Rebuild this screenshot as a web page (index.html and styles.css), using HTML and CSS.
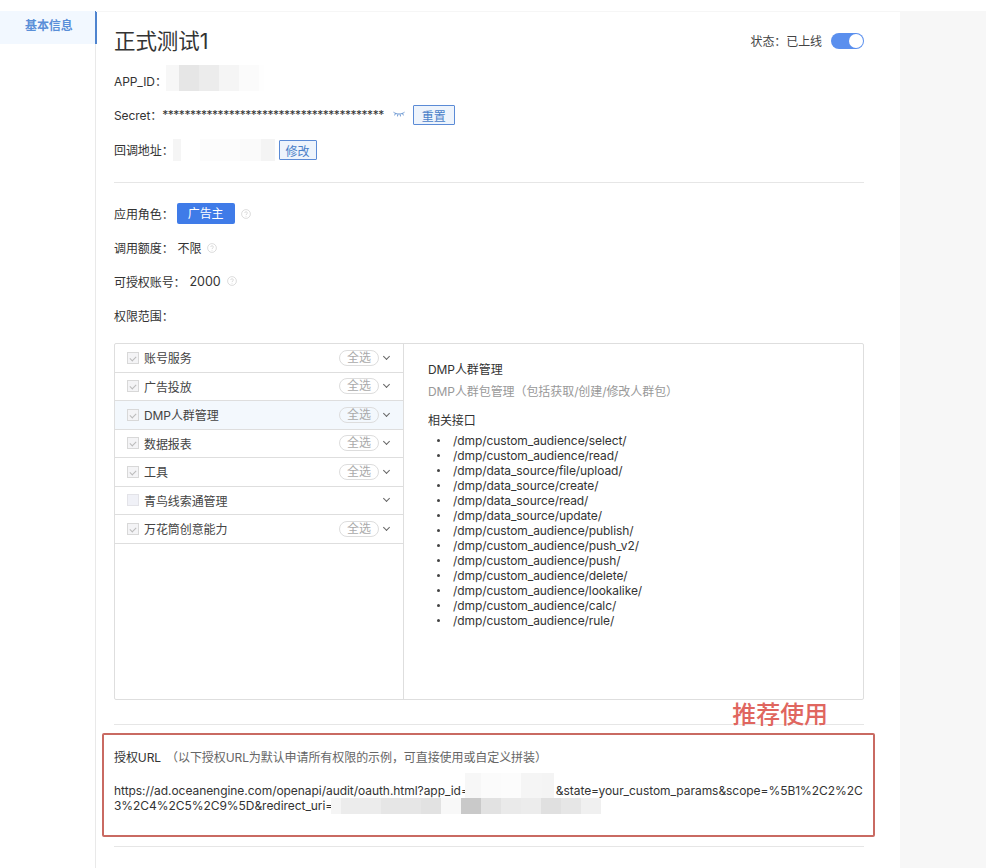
FILE: index.html
```html
<!DOCTYPE html>
<html lang="zh-CN">
<head>
<meta charset="utf-8">
<title>正式测试1</title>
<link rel="stylesheet" href="styles.css">
</head>
<body>
<div class="page">
  <aside class="side">
    <div class="side-item">基本信息</div>
  </aside>
  <main class="main">
    <div class="head">
      <h1 class="title">正式测试1</h1>
      <div class="status">
        <span>状态：已上线</span>
        <span class="toggle"><span class="knob"></span></span>
      </div>
    </div>
    <div class="row"><span>APP_ID：</span><span class="mosaic m-id"></span></div>
    <div class="row"><span>Secret：</span><span class="stars">****************************************</span>
      <svg class="eye" viewBox="0 0 12 7" width="12" height="7"><path d="M.5 1.2c3 2.4 8 2.4 11 0M2.4 2.6 1.6 4.4M4.8 3.4 4.5 5.4M7.2 3.4 7.5 5.4M9.6 2.6 10.4 4.4" fill="none" stroke="#4a80c8" stroke-width=".8"/></svg>
      <button class="btn btn-reset">重置</button>
    </div>
    <div class="row row-cb"><span>回调地址：</span><span class="mosaic m-cb"></span><button class="btn btn-edit">修改</button></div>
    <hr class="line line-a">
    <div class="row row-meta"><span>应用角色：</span><span class="role">广告主</span>
      <svg class="help" viewBox="0 0 10 10" width="10" height="10"><use href="#q"/></svg></div>
    <div class="row row-meta"><span>调用额度：</span><span class="val">不限</span>
      <svg class="help" viewBox="0 0 10 10" width="10" height="10"><use href="#q"/></svg></div>
    <div class="row row-meta"><span>可授权账号：</span><span class="val num">2000</span>
      <svg class="help" viewBox="0 0 10 10" width="10" height="10"><use href="#q"/></svg></div>
    <div class="row row-meta"><span>权限范围：</span></div>

    <section class="scope">
      <ul class="scope-list">
        <li class="scope-item"><span class="check on"></span><span class="name">账号服务</span><span class="pill">全选</span><span class="chev"></span></li>
        <li class="scope-item"><span class="check on"></span><span class="name">广告投放</span><span class="pill">全选</span><span class="chev"></span></li>
        <li class="scope-item active"><span class="check on"></span><span class="name">DMP人群管理</span><span class="pill">全选</span><span class="chev"></span></li>
        <li class="scope-item"><span class="check on"></span><span class="name">数据报表</span><span class="pill">全选</span><span class="chev"></span></li>
        <li class="scope-item"><span class="check on"></span><span class="name">工具</span><span class="pill">全选</span><span class="chev"></span></li>
        <li class="scope-item"><span class="check"></span><span class="name">青鸟线索通管理</span><span class="chev"></span></li>
        <li class="scope-item"><span class="check on"></span><span class="name">万花筒创意能力</span><span class="pill">全选</span><span class="chev"></span></li>
      </ul>
      <div class="detail">
        <div class="d-title">DMP人群管理</div>
        <div class="d-desc">DMP人群包管理（包括获取/创建/修改人群包）</div>
        <div class="d-sub">相关接口</div>
        <ul class="api">
          <li>/dmp/custom_audience/select/</li>
          <li>/dmp/custom_audience/read/</li>
          <li>/dmp/data_source/file/upload/</li>
          <li>/dmp/data_source/create/</li>
          <li>/dmp/data_source/read/</li>
          <li>/dmp/data_source/update/</li>
          <li>/dmp/custom_audience/publish/</li>
          <li>/dmp/custom_audience/push_v2/</li>
          <li>/dmp/custom_audience/push/</li>
          <li>/dmp/custom_audience/delete/</li>
          <li>/dmp/custom_audience/lookalike/</li>
          <li>/dmp/custom_audience/calc/</li>
          <li>/dmp/custom_audience/rule/</li>
        </ul>
      </div>
    </section>

    <hr class="line line-b">
    <section class="auth">
      <div class="auth-box"></div>
      <div class="auth-note">推荐使用</div>
      <div class="auth-title">授权URL<span class="auth-hint">（以下授权URL为默认申请所有权限的示例，可直接使用或自定义拼装）</span></div>
      <p class="auth-url">https://ad.oceanengine.com/openapi/audit/oauth.html?app_id=<span class="mosaic m-app"></span>&amp;state=your_custom_params&amp;scope=%5B1%2C2%2C3%2C4%2C5%2C9%5D&amp;redirect_uri=<span class="mosaic m-uri"></span></p>
    </section>
    <hr class="line line-c">
  </main>
  <div class="rail"></div>
</div>
<svg class="defs" width="0" height="0"><defs><g id="q"><circle cx="5" cy="5" r="4.4" fill="none" stroke="#d4d4d4" stroke-width=".8"/><path d="M3.7 4c0-1.7 2.7-1.7 2.7 0 0 1-1.4 1-1.4 2.1M5 7v.7" fill="none" stroke="#d4d4d4" stroke-width=".8"/></g></defs></svg>
</body>
</html>
```
FILE: styles.css
```css
* { box-sizing: border-box; }
html, body { margin: 0; height: 100%; background: #fff; }
body {
  font-family: Inter, "Noto Sans CJK SC", "Liberation Sans", sans-serif;
  font-size: 12px;
  letter-spacing: -0.08px;
  color: #333;
  overflow: hidden;
}
.defs { position: absolute; }
.page { display: flex; height: 868px; padding-top: 11px; }
.side { width: 96px; flex: none; border-right: 1px solid #e9e9e9; }
.side-item {
  height: 33px; margin-right: -2px; background: #f2f8ff; border-right: 2px solid #4f84cf;
  color: #5a8fd8; font-weight: 700; padding-left: 25px; line-height: 30px;
}
.main { width: 804px; flex: none; padding: 0 36px 0 18px; border-top: 1px solid #f6f6f6; }
.rail { flex: 1; background: #f7f7f7; }

.head { display: flex; justify-content: space-between; align-items: center; height: 51px; }
.title { margin: 7px 0 0; font-size: 21.5px; font-weight: 400; color: #333; line-height: 30px; }
.status { display: flex; align-items: center; gap: 9px; margin-top: 6px; color: #444; }
.toggle { display: block; width: 33px; height: 16px; border-radius: 8px; background: #5a8fee; position: relative; }
.knob { position: absolute; right: 1px; top: 1px; width: 14px; height: 14px; border-radius: 50%; background: #fff; }

.row { display: flex; align-items: center; height: 34px; }
.row-cb { height: 36px; }
.row-meta { height: 33.75px; }
.mosaic { display: block; }
.m-id { width: 98px; height: 26px; margin: -4px 0 0 -1px; background: linear-gradient(90deg, #f7f7f7 0 13px, #e6e6e6 13px 33px, #ececec 33px 53px, #f5f5f5 53px 73px, #fbfbfb 73px 93px, #fefefe 93px); }
.m-cb { width: 102px; height: 22px; margin: 2px 0 0 -1px; background: linear-gradient(90deg, #f5f5f5 0 8px, #fff 8px 27px, #fcfcfc 27px 67px, #fafafa 67px 88px, #f4f4f4 88px); }
.stars { letter-spacing: -0.475px; color: #333; }
.eye { margin-left: 9px; }
.btn {
  font: inherit; height: 20px; padding: 0; margin-top: 2px; border: 1px solid #5b8bd6; border-radius: 1px;
  background: #eef4fc; color: #4a80c8;
}
.btn-reset { width: 42px; margin-left: 8px; }
.btn-edit { width: 38px; margin-left: 4px; }
.line { border: 0; border-top: 1px solid #e6e6e6; margin: 0; }
.line-a { margin: 15px 0 14px; }
.role { display: block; width: 58px; height: 21px; line-height: 21px; text-align: center; background: #3f7be8; color: #fff; border-radius: 2px; margin-left: 3px; }
.help { margin-left: 6px; }
.val { margin-left: 4px; }
.num { font-size: 12.5px; }

.scope { display: flex; height: 357px; margin-top: 11px; border: 1px solid #dedede; border-radius: 2px; }
.scope-list { list-style: none; margin: 0; padding: 0; width: 289px; flex: none; border-right: 1px solid #dedede; }
.scope-item { display: flex; align-items: center; height: 28.5px; padding-left: 12px; border-bottom: 1px solid #dedede; }
.scope-item.active { background: #f3f8fd; }
.check { width: 12px; height: 12px; flex: none; background: #f0f1f7; border: 1px solid #e3e3e8; position: relative; }
.check.on { background: #f4f4f6; border-color: #d8d8d8; }
.check.on::after {
  content: ""; position: absolute; left: 3px; top: 2px; width: 3px; height: 5px;
  border: solid #bbb; border-width: 0 1px 1px 0; transform: rotate(45deg);
}
.name { margin-left: 5px; flex: 1; color: #444; }
.pill {
  width: 40px; height: 16px; line-height: 14px; border: 1px solid #ddd; border-radius: 8px;
  text-align: center; color: #aaa;
}
.chev { width: 5px; height: 5px; margin: -3px 14px 0 5px; border: solid #666; border-width: 0 1px 1px 0; transform: rotate(45deg); flex: none; }
.detail { flex: 1; padding: 18px 24px; }
.d-title { line-height: 16px; color: #333; }
.d-desc { margin-top: 6px; line-height: 16px; color: #999; }
.d-sub { margin-top: 13px; line-height: 16px; }
.api { list-style: none; margin: 4px 0 0; padding: 0 0 0 9px; line-height: 15px; }
.api li { display: flex; align-items: center; }
.api li::before { content: ""; width: 3px; height: 3px; border-radius: 50%; background: #444; margin-right: 13px; flex: none; }

.line-b { margin: 24px 0 0; }
.auth { position: relative; height: 121px; padding-top: 24px; }
.auth-box { position: absolute; left: -12px; right: -11px; top: 8px; height: 104px; border: 2px solid #c96a62; border-radius: 2px; }
.auth-note { position: absolute; right: 36px; top: -25px; font-size: 24px; font-weight: 500; line-height: 30px; color: #e0665f; }
.auth-title { line-height: 18px; color: #333; }
.auth-hint { margin-left: 5px; color: #666; }
.auth-url { margin: 16px 0 0; line-height: 15px; word-break: break-all; letter-spacing: -0.05px; }
.auth-url .mosaic { display: inline-block; vertical-align: top; }
.m-app { width: 89px; height: 25px; margin: -10px 2px -5px -4px; background: linear-gradient(90deg, #f7f7f7 0 16px, #fbfbfb 16px 36px, #fcfcfc 36px 56px, #f5f5f5 56px 77px, #f4f4f4 77px); }
.m-uri { width: 270px; height: 16px; margin: 0 0 -1px -2px; background: linear-gradient(90deg, #f5f5f5 0 10px, #ececec 10px 50px, #e6e6e6 50px 90px, #e2e2e2 90px 110px, #f8f8f8 110px 130px, #c9c9c9 130px 150px, #e2e2e2 150px 170px, #eaeaea 170px 190px, #ececec 190px 210px, #e0e0e0 210px 230px, #e6e6e6 230px 250px, #f0f0f0 250px); }
.line-c { margin: 0; }
```
